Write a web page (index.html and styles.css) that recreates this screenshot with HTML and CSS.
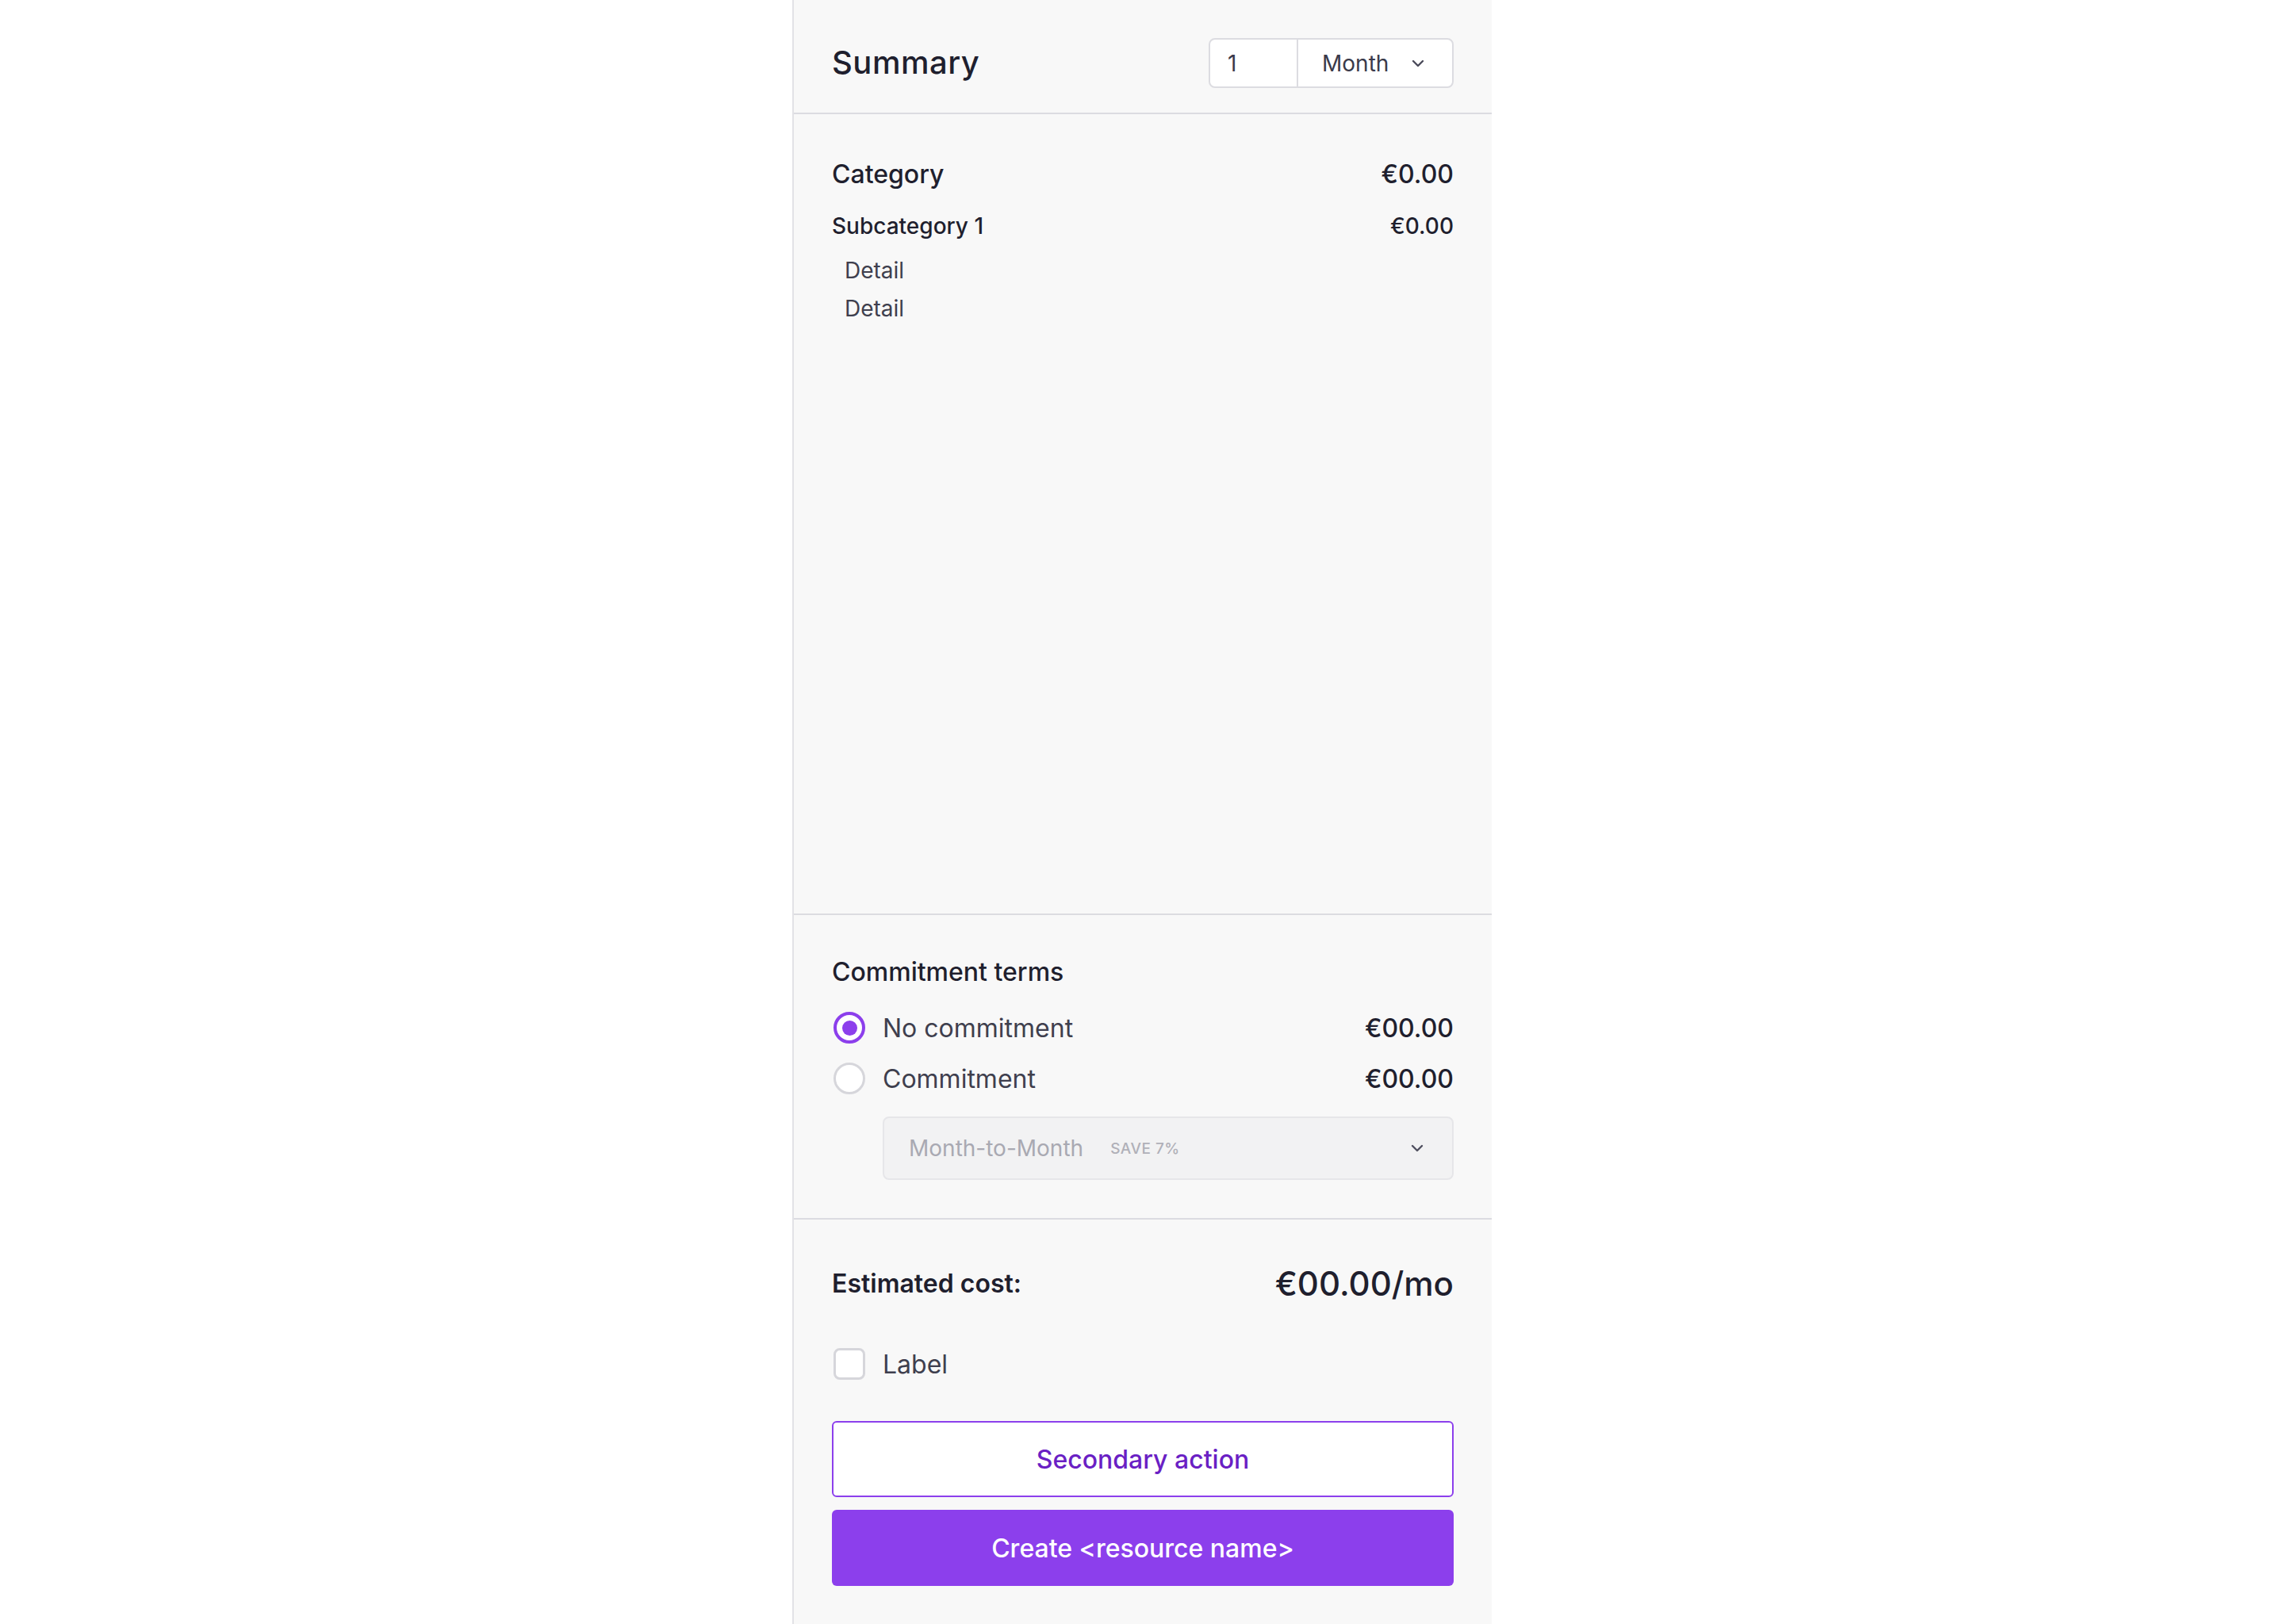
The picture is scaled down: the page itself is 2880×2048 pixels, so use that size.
FILE: index.html
```html
<!DOCTYPE html>
<html lang="en">
<head>
<meta charset="utf-8">
<title>Summary</title>
<link rel="stylesheet" href="styles.css">
</head>
<body>
<aside class="panel">
  <header class="header">
    <h1 class="title">Summary</h1>
    <div class="qty">
      <div class="qty-num">1</div>
      <div class="qty-unit">
        <span>Month</span>
        <svg class="chev" viewBox="0 0 16 10" width="16" height="10"><path d="M2 2 L8 8 L14 2" fill="none" stroke="currentColor" stroke-width="2.4" stroke-linecap="round" stroke-linejoin="round"/></svg>
      </div>
    </div>
  </header>

  <section class="breakdown">
    <div class="row cat-row"><span>Category</span><span>€0.00</span></div>
    <div class="row sub-row"><span>Subcategory 1</span><span>€0.00</span></div>
    <ul class="details">
      <li>Detail</li>
      <li>Detail</li>
    </ul>
  </section>

  <section class="terms">
    <h2 class="terms-title">Commitment terms</h2>
    <div class="option">
      <span class="radio radio-on"><span class="dot"></span></span>
      <span class="opt-label">No commitment</span>
      <span class="opt-price">€00.00</span>
    </div>
    <div class="option">
      <span class="radio"></span>
      <span class="opt-label">Commitment</span>
      <span class="opt-price">€00.00</span>
    </div>
    <div class="term-select">
      <span class="term-name">Month-to-Month</span>
      <span class="term-save">SAVE 7%</span>
      <svg class="chev term-chev" viewBox="0 0 16 10" width="16" height="10"><path d="M2 2 L8 8 L14 2" fill="none" stroke="currentColor" stroke-width="2.4" stroke-linecap="round" stroke-linejoin="round"/></svg>
    </div>
  </section>

  <footer class="footer">
    <div class="row est-row"><span class="est-label">Estimated cost:</span><span class="est-value">€00.00/mo</span></div>
    <label class="check-row"><span class="checkbox"></span><span class="check-label">Label</span></label>
    <button class="btn btn-secondary" type="button">Secondary action</button>
    <button class="btn btn-primary" type="button">Create &lt;resource name&gt;</button>
  </footer>
</aside>
</body>
</html>
```

FILE: styles.css
```css
* { box-sizing: border-box; }

html, body {
  margin: 0;
  padding: 0;
  background: #ffffff;
  font-family: Inter, "Noto Sans", "Liberation Sans", sans-serif;
  color: #1f1f2e;
}

.panel {
  width: 882px;
  min-height: 2048px;
  margin: 0 auto;
  background: #f8f8f8;
  border-left: 2px solid #e2e2e6;
  display: flex;
  flex-direction: column;
}

.header {
  height: 144px;
  padding: 48px 48px 0;
  border-bottom: 2px solid #dcdce1;
  display: flex;
  align-items: flex-start;
  justify-content: space-between;
}

.title {
  margin: 0;
  height: 62px;
  line-height: 62px;
  font-size: 40px;
  font-weight: 500;
  color: #1f1f2e;
  letter-spacing: 0.5px;
}

.qty {
  display: flex;
  height: 63px;
  width: 309px;
  border: 2px solid #dcdce1;
  border-radius: 8px;
  background: #ffffff;
  font-size: 28px;
  color: #3a3a4a;
}

.qty-num {
  width: 111px;
  padding-left: 22px;
  border-right: 2px solid #dcdce1;
  display: flex;
  align-items: center;
}

.qty-unit {
  flex: 1;
  padding-left: 30px;
  display: flex;
  align-items: center;
  gap: 29px;
}

.chev {
  color: #4a4a5a;
  width: 16px;
  height: 10px;
}

.breakdown {
  flex: 1;
  padding: 47px 48px;
  border-bottom: 2px solid #dcdce1;
}

.row {
  display: flex;
  justify-content: space-between;
  align-items: center;
}

.cat-row {
  height: 56px;
  font-size: 32px;
  font-weight: 500;
  color: #1f1f2e;
  margin-bottom: 10px;
}

.sub-row {
  height: 56px;
  font-size: 28px;
  font-weight: 500;
  color: #1f1f2e;
}

.details {
  list-style: none;
  margin: 4px 0 0;
  padding: 0 0 0 16px;
}

.details li {
  height: 48px;
  line-height: 48px;
  font-size: 28px;
  color: #3f3f4e;
}

.terms {
  padding: 48px 48px;
  border-bottom: 2px solid #dcdce1;
}

.terms-title {
  margin: 0 0 14px;
  height: 48px;
  line-height: 48px;
  font-size: 32px;
  font-weight: 500;
  color: #1f1f2e;
}

.option {
  height: 64px;
  display: flex;
  align-items: center;
}

.radio {
  width: 40px;
  height: 40px;
  margin-left: 2px;
  border-radius: 50%;
  border: 3px solid #d6d6db;
  background: #ffffff;
  display: flex;
  align-items: center;
  justify-content: center;
  flex-shrink: 0;
}

.radio-on {
  border: 4px solid #8c3fec;
}

.dot {
  width: 19px;
  height: 19px;
  border-radius: 50%;
  background: #8c3fec;
}

.opt-label {
  margin-left: 22px;
  font-size: 32px;
  color: #3f3f4e;
  flex: 1;
}

.opt-price {
  font-size: 32px;
  font-weight: 500;
  color: #1f1f2e;
}

.term-select {
  margin: 16px 0 0 64px;
  height: 80px;
  border: 2px solid #e6e6e9;
  border-radius: 8px;
  background: #f2f2f3;
  display: flex;
  align-items: center;
  padding: 0 36px 0 31px;
}

.term-name {
  font-size: 28px;
  color: #a9a9b2;
}

.term-save {
  margin-left: 34px;
  font-size: 19px;
  font-weight: 500;
  color: #b0b0b8;
  letter-spacing: 0.5px;
  flex: 1;
}

.term-chev {
  color: #50505f;
}

.footer {
  padding: 48px 48px;
  display: flex;
  flex-direction: column;
}

.est-row {
  height: 64px;
}

.est-label {
  font-size: 32px;
  font-weight: 600;
  color: #1f1f2e;
}

.est-value {
  font-size: 42px;
  font-weight: 500;
  color: #1f1f2e;
}

.check-row {
  margin-top: 46px;
  height: 48px;
  display: flex;
  align-items: center;
}

.checkbox {
  width: 40px;
  height: 40px;
  margin-left: 2px;
  border: 3px solid #d6d6db;
  border-radius: 8px;
  background: #ffffff;
}

.check-label {
  margin-left: 22px;
  font-size: 32px;
  color: #3f3f4e;
}

.btn {
  height: 96px;
  width: 100%;
  border-radius: 6px;
  font-family: Inter, "Noto Sans", "Liberation Sans", sans-serif;
  font-size: 32px;
  font-weight: 500;
  cursor: pointer;
}

.btn-secondary {
  margin-top: 48px;
  background: #ffffff;
  border: 2px solid #8c3fec;
  color: #6a1fc4;
}

.btn-primary {
  margin-top: 16px;
  background: #8c3fec;
  border: none;
  color: #ffffff;
}
```
